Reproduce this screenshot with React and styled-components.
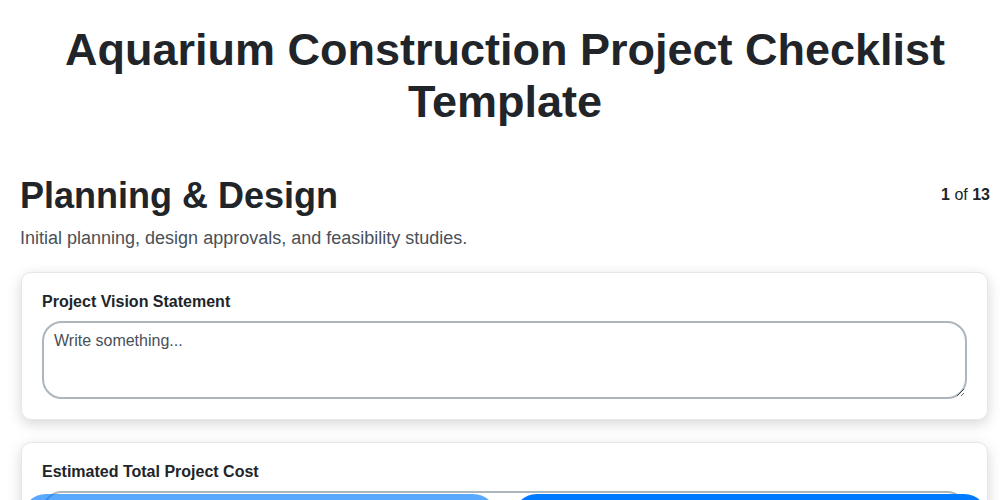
import React from 'react';
import styled, { createGlobalStyle } from 'styled-components';

const GlobalStyle = createGlobalStyle`
  body {
    margin: 0;
    font-family: 'Liberation Sans', Arial, sans-serif;
    color: #212529;
    background: #ffffff;
  }
`;

const Page = styled.div`
  padding: 0 10px 80px 20px;
`;

const Title = styled.h1`
  margin: 0;
  padding: 24px 40px 0;
  font-size: 45px;
  line-height: 52px;
  font-weight: bold;
  text-align: center;
  color: #212529;
`;

const SectionHeader = styled.div`
  display: flex;
  align-items: center;
  justify-content: space-between;
  margin-top: 46px;
`;

const SectionTitle = styled.h2`
  margin: 0;
  font-size: 36px;
  line-height: 44px;
  font-weight: bold;
`;

const Counter = styled.div`
  margin-bottom: 2px;
  font-size: 16px;
  color: #212529;
  b {
    font-weight: bold;
  }
`;

const Description = styled.p`
  margin: 10px 0 23px;
  font-size: 18px;
  color: #495057;
`;

const Card = styled.div`
  margin: 0 2px 22px 1px;
  padding: 20px;
  background: #fff;
  border: 1px solid #e5e7eb;
  border-radius: 10px;
  box-shadow: 0 4px 14px rgba(0, 0, 0, 0.16);
`;

const Label = styled.label`
  display: block;
  font-size: 16px;
  font-weight: bold;
  margin-bottom: 10px;
  color: #212529;
`;

const TextArea = styled.textarea`
  display: block;
  width: 100%;
  box-sizing: border-box;
  height: 78px;
  padding: 9px 10px;
  border: 2px solid #adb5bd;
  border-radius: 20px;
  font-family: 'Liberation Sans', Arial, sans-serif;
  font-size: 16px;
  color: #212529;
  resize: vertical;
  &::placeholder {
    color: #495057;
  }
`;

const Input = styled.input`
  display: block;
  width: 100%;
  box-sizing: border-box;
  height: 44px;
  padding: 8px 12px;
  border: 2px solid #adb5bd;
  border-radius: 20px;
  font-family: 'Liberation Sans', Arial, sans-serif;
  font-size: 16px;
`;

const Nav = styled.div`
  position: fixed;
  top: 494px;
  left: 22px;
  right: 12px;
  display: flex;
  gap: 16px;
`;

const NavButton = styled.button`
  flex: 1;
  height: 64px;
  padding: 16px 0 0;
  border: none;
  border-radius: 24px;
  background: #007bff;
  opacity: ${(p) => (p.disabled ? 0.65 : 1)};
  color: #fff;
  font-family: 'Liberation Sans', Arial, sans-serif;
  font-size: 16px;
  font-weight: bold;
`;

export default function App() {
  return (
    <>
      <GlobalStyle />
      <Page>
        <Title>Aquarium Construction Project Checklist Template</Title>
        <SectionHeader>
          <SectionTitle>Planning &amp; Design</SectionTitle>
          <Counter>
            <b>1</b> of <b>13</b>
          </Counter>
        </SectionHeader>
        <Description>Initial planning, design approvals, and feasibility studies.</Description>
        <Card>
          <Label>Project Vision Statement</Label>
          <TextArea placeholder="Write something..." />
        </Card>
        <Card>
          <Label>Estimated Total Project Cost</Label>
          <Input type="number" />
        </Card>
      </Page>
      <Nav>
        <NavButton disabled>Previous</NavButton>
        <NavButton>Next</NavButton>
      </Nav>
    </>
  );
}
